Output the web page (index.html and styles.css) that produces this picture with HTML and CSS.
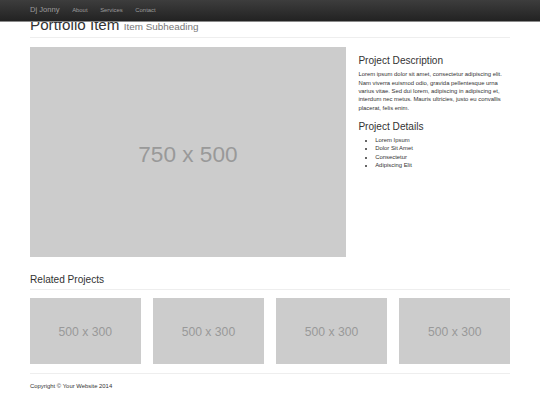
FILE: index.html
```html
<!DOCTYPE html>
<html>
<head>
<meta charset="utf-8">
<link rel="stylesheet" href="styles.css">
</head>
<body>
<nav class="navbar">
  <div class="nav-inner">
    <a class="brand">Dj Jonny</a>
    <ul class="nav-links">
      <li>About</li>
      <li>Services</li>
      <li>Contact</li>
    </ul>
  </div>
</nav>
<div class="container">
  <h1 class="page-header">Portfolio Item <small>Item Subheading</small></h1>
  <div class="row">
    <div class="col-main">
      <div class="ph ph-large">750 x 500</div>
    </div>
    <div class="col-side">
      <h3>Project Description</h3>
      <p>Lorem ipsum dolor sit amet, consectetur adipiscing elit. Nam viverra euismod odio, gravida pellentesque urna varius vitae. Sed dui lorem, adipiscing in adipiscing et, interdum nec metus. Mauris ultricies, justo eu convallis placerat, felis enim.</p>
      <h3>Project Details</h3>
      <ul>
        <li>Lorem Ipsum</li>
        <li>Dolor Sit Amet</li>
        <li>Consectetur</li>
        <li>Adipiscing Elit</li>
      </ul>
    </div>
  </div>
  <h3 class="page-header related">Related Projects</h3>
  <div class="thumbs">
    <div class="ph ph-small">500 x 300</div>
    <div class="ph ph-small">500 x 300</div>
    <div class="ph ph-small">500 x 300</div>
    <div class="ph ph-small">500 x 300</div>
  </div>
  <hr>
  <footer><p>Copyright &copy; Your Website 2014</p></footer>
</div>
</body>
</html>
```

FILE: styles.css
```css
html, body {
  margin: 0;
  padding: 0;
}
body {
  font-family: "Liberation Sans", Arial, sans-serif;
  font-size: 5.9px;
  line-height: 8.4px;
  color: #333;
  background: #fff;
}
.navbar {
  position: fixed;
  top: 0;
  left: 0;
  right: 0;
  height: 21px;
  background: linear-gradient(#3d3d3d, #222);
  border-bottom: 1px solid #8a8a8a;
  z-index: 10;
}
.nav-inner {
  width: 480px;
  margin: 0 auto;
  display: flex;
  align-items: center;
  height: 21px;
}
.brand {
  font-size: 7.6px;
  color: #9d9d9d;
  padding-right: 6.3px;
}
.nav-links {
  list-style: none;
  margin: 0;
  padding: 0;
  display: flex;
}
.nav-links li {
  padding: 0 6.3px;
  color: #9d9d9d;
  font-size: 5.9px;
}
.container {
  width: 480px;
  margin: 0 auto;
}
h1, h3 {
  font-weight: 500;
  line-height: 1.1;
  color: #333;
}
.page-header {
  margin: 16.6px 0 8.4px;
  padding-bottom: 3.8px;
  border-bottom: 1px solid #eee;
}
h1.page-header {
  font-size: 15.2px;
}
h1 small {
  font-size: 65%;
  color: #777;
  font-weight: 400;
}
.row {
  display: flex;
  gap: 12.6px;
}
.col-main {
  width: 315.8px;
  flex: none;
}
.col-side {
  flex: 1;
}
.ph {
  background: #ccc;
  color: #999;
  display: flex;
  align-items: center;
  justify-content: center;
  box-sizing: border-box;
}
.ph-large {
  height: 210.5px;
  font-size: 22.6px;
  padding-top: 6px;
}
.ph-small {
  height: 66.3px;
  font-size: 12.2px;
  padding-top: 2px;
}
.col-side h3 {
  font-size: 10.1px;
  margin: 8.4px 0 4.2px;
}
.col-side p {
  margin: 0 0 4.2px;
}
.col-side ul {
  margin: 0;
  padding-left: 16.8px;
}
h3.related {
  font-size: 10.1px;
  margin-top: 16.8px;
}
.thumbs {
  display: grid;
  grid-template-columns: repeat(4, 1fr);
  gap: 12.6px;
}
hr {
  border: 0;
  border-top: 1px solid #eee;
  margin: 8.4px 0;
}
footer p {
  margin: 0;
}
```
